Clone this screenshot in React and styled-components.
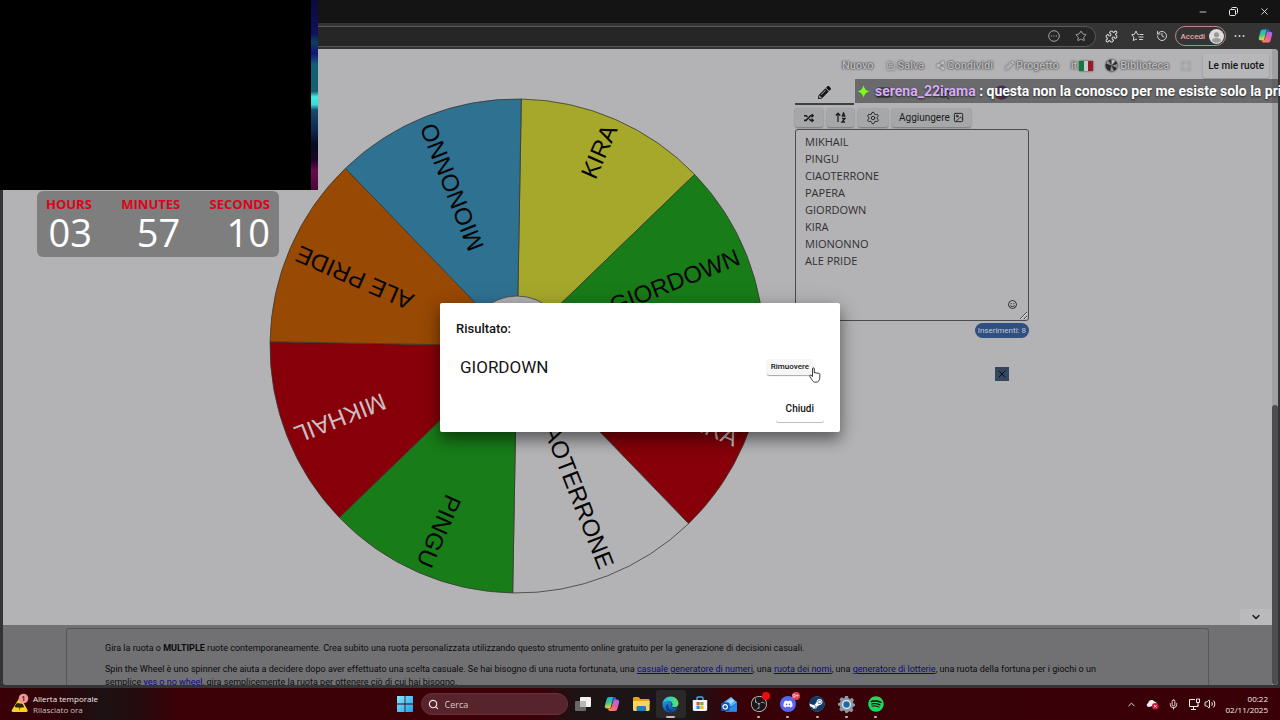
import React from 'react';
import styled, { createGlobalStyle } from 'styled-components';
import {
  FaShareAlt, FaPencilAlt, FaRandom, FaSpotify, FaDiscord, FaSteam, FaRegSmile,
} from 'react-icons/fa';
import { SiObsstudio } from 'react-icons/si';
import {
  Star, Puzzle, History, Minus, X, Save, Maximize, Image as ImageIcon,
  ChevronDown, ChevronUp, Search, Mic, Volume2, Settings, EyeOff, IdCard,
} from 'lucide-react';

const GlobalStyle = createGlobalStyle`
  * { box-sizing: border-box; }
  body { margin: 0; background: #1b1b1b; }
  button, input, textarea { font: inherit; color: inherit; }
  button { border: 0; padding: 0; background: none; cursor: pointer; }
`;

const Screen = styled.div`
  position: relative;
  display: flex;
  flex-direction: column;
  width: 100%;
  height: 100vh;
  overflow: hidden;
  background: #343434;
  font-family: Roboto, "Liberation Sans", sans-serif;
`;

/* Browser chrome */
const TitleBar = styled.header`
  display: flex;
  flex: none;
  justify-content: flex-end;
  align-items: center;
  gap: 18px;
  height: 23px;
  padding: 0 9px;
  background: #141414;
  color: #e8e8e8;
`;

const IconButton = styled.button`
  display: flex;
  flex: none;
  align-items: center;
  justify-content: center;
  width: ${(p) => p.$size || 13}px;
  height: ${(p) => p.$size || 13}px;
`;

const Toolbar = styled.div`
  display: flex;
  flex: none;
  align-items: center;
  gap: 12px;
  height: 26px;
  padding: 0 7px 0 80px;
  color: #d2d2d2;
`;

const AddressBar = styled.div`
  display: flex;
  flex: 1;
  align-items: center;
  gap: 14px;
  height: 21px;
  margin-right: -4px;
  padding: 0 7px;
  border: 1px solid #5a5a5a;
  border-radius: 11px;
  background: #262626;
  color: #a3a3a3;
`;

const AddressInput = styled.input`
  flex: 1;
  min-width: 0;
  border: 0;
  background: none;
  outline: 0;
`;

const SignIn = styled.button`
  display: flex;
  align-items: center;
  gap: 4px;
  height: 20px;
  padding: 0 1px 0 5px;
  margin: 0 -5px 0 -6px;
  border: 1px solid #b58a88;
  border-radius: 10px;
  color: #eba6a8;
  font-size: 8px;
  font-weight: 500;
`;

/* Web page */
const Viewport = styled.main`
  position: relative;
  display: flex;
  flex: 1;
  min-height: 0;
  margin: 0 2px 3px 3px;
  border-radius: 0 4px 4px 4px;
  overflow: hidden;
  background: #b3b2b5;
`;

const Page = styled.div`
  display: flex;
  flex: 1;
  flex-direction: column;
  min-width: 0;
`;

const ScrollTrack = styled.div`
  display: flex;
  align-items: flex-end;
  width: 6px;
  background: #a09fa2;
`;

const ScrollThumb = styled.div`
  width: 6px;
  height: 44%;
  border-radius: 3px;
  background: #4d4d4f;
`;

const Nav = styled.nav`
  display: flex;
  flex: none;
  justify-content: flex-end;
  align-items: center;
  gap: 12px;
  height: 33px;
  padding-right: 3px;
`;

const NavLink = styled.a`
  display: flex;
  align-items: center;
  gap: 2px;
  color: #bcbbbe;
  font-size: 11px;
  font-weight: 500;
  line-height: 13px;
  text-decoration: none;
  text-shadow: 0 0 2px #3c3c3c, 0 0 2px #5c5c5c;
  svg { filter: drop-shadow(0 0 1px #444); }
`;

const MyWheels = styled.button`
  height: 24px;
  padding: 0 5px;
  border-radius: 2px;
  background: #b7b6b9;
  box-shadow: 0 1px 2px rgba(0, 0, 0, 0.25);
  color: #161616;
  font-size: 10px;
  font-weight: 500;
  white-space: nowrap;
`;

const Content = styled.div`
  display: flex;
  flex: 1;
  min-height: 0;
`;

const WheelArea = styled.section`
  display: flex;
  flex: 1;
  justify-content: center;
  align-items: flex-start;
  padding: 16px 0 0 236px;
`;

const WheelSvg = styled.svg`
  display: block;
  width: 496px;
  height: 496px;
`;

const Side = styled.aside`
  display: flex;
  flex: none;
  flex-direction: column;
  justify-content: space-between;
  width: 477px;
`;

const Panel = styled.div`
  display: flex;
  flex-direction: column;
  width: 234px;
`;

const Tabs = styled.div`
  display: flex;
  height: 23px;
`;

const Tab = styled.button`
  display: flex;
  flex: none;
  align-items: center;
  justify-content: center;
  width: 59px;
  border-bottom: 2px solid ${(p) => (p.$active ? '#3d3f42' : 'transparent')};
  color: #141414;
`;

const Tools = styled.div`
  display: flex;
  gap: 4px;
  padding: 3px 0 2px;
`;

const Tool = styled.button`
  display: flex;
  align-items: center;
  justify-content: center;
  gap: 3px;
  height: 19px;
  padding: 0 ${(p) => p.$pad || 8}px;
  border-radius: 2px;
  background: #a6a7a9;
  box-shadow: 0 1px 2px rgba(0, 0, 0, 0.35);
  color: #1c1c1c;
  font-size: 10px;
`;

const EntryBox = styled.div`
  position: relative;
  display: flex;
  height: 192px;
`;

const Entries = styled.textarea`
  flex: 1;
  padding: 3px 9px;
  border: 1px solid #4b4b4d;
  border-radius: 3px;
  background: transparent;
  outline: 0;
  color: #303032;
  font: 11px/17px "Open Sans", "Noto Sans", sans-serif;
`;

const EmojiButton = styled(IconButton)`
  position: absolute;
  right: 11px;
  bottom: 11px;
  color: #222;
`;

const CountPill = styled.span`
  align-self: flex-end;
  margin-top: 2px;
  padding: 0 3px;
  border-radius: 8px;
  background: #2f4f80;
  color: #c3c9d2;
  font-size: 8px;
  line-height: 15px;
`;

const CloseAd = styled.button`
  display: flex;
  align-self: flex-end;
  align-items: center;
  justify-content: center;
  width: 14px;
  height: 14px;
  margin: 29px 20px 0 0;
  background: #34475f;
  color: #0c1016;
`;

const ScrollDown = styled.button`
  display: flex;
  align-self: flex-end;
  align-items: center;
  justify-content: center;
  width: 32px;
  height: 16px;
  background: #bab9bc;
  color: #111;
`;

const Article = styled.footer`
  flex: none;
  height: 60px;
  padding: 3px 63px 0;
  background: #717173;
  overflow: hidden;
`;

const ArticleBox = styled.div`
  height: 57px;
  padding: 13px 92px 0 38px;
  border: 1px solid #565658;
  border-bottom: 0;
  border-radius: 3px 3px 0 0;
  overflow: hidden;
  color: #0b0b0b;
  font-size: 9px;
  line-height: 13px;
`;

const Paragraph = styled.p`
  margin: 0 0 8px;
`;

const TextLink = styled.a`
  color: #0a0a78;
`;

/* Result dialog */
const Backdrop = styled.div`
  position: absolute;
  inset: 0 1px 0 0;
  display: flex;
  align-items: center;
  justify-content: center;
`;

const Dialog = styled.div`
  display: flex;
  flex-direction: column;
  width: 400px;
  height: 129px;
  padding: 18px 16px 10px;
  border-radius: 2px;
  background: #fff;
  box-shadow: 0 8px 14px rgba(0, 0, 0, 0.38), 0 3px 22px rgba(0, 0, 0, 0.2);
  color: #151515;
`;

const DialogTitle = styled.h2`
  margin: 0;
  font-size: 13px;
  font-weight: 500;
  line-height: 16px;
`;

const ResultRow = styled.div`
  display: flex;
  align-items: center;
  justify-content: space-between;
  padding: 19px 11px 0 4px;
  font-size: 17px;
  line-height: 22px;
`;

const RemoveButton = styled.button`
  position: relative;
  height: 16px;
  padding: 0 4px;
  border-radius: 2px;
  background: #f6f6f6;
  box-shadow: 0 1px 1px rgba(0, 0, 0, 0.35);
  font-size: 8px;
  font-weight: 500;
  line-height: 14px;
`;

const HandCursor = styled.svg`
  position: absolute;
  left: 42px;
  top: 8px;
  width: 12px;
  height: 16px;
`;

const CloseButton = styled.button`
  align-self: flex-end;
  height: 26px;
  margin-top: auto;
  padding: 0 10px;
  border-radius: 2px;
  box-shadow: 0 1px 0 rgba(0, 0, 0, 0.25);
  font-size: 10px;
  font-weight: 500;
  line-height: 26px;
`;

/* Stream overlays */
const Camera = styled.div`
  position: absolute;
  left: 0;
  top: 0;
  width: 318px;
  height: 190px;
  padding-left: 311px;
  background: #000;
`;

const CameraEdge = styled.div`
  height: 100%;
  background: linear-gradient(#0b0a3c 0%, #101060 18%, #0c3f60 22%, #11157a 28%, #125f77 34%,
    #12606f 48%, #3ff0e6 51%, #36dcd8 55%, #134a72 58%, #0d2a50 68%, #060a22 76%, #180626 84%,
    #6b0a50 90%, #4a0838 100%);
`;

const Timer = styled.div`
  position: absolute;
  left: 37px;
  top: 191px;
  display: flex;
  justify-content: space-between;
  width: 242px;
  height: 66px;
  padding: 4px 9px 0;
  border-radius: 6px;
  background: #7e7e7f;
  font-family: "Open Sans", "Noto Sans", sans-serif;
`;

const TimerUnit = styled.div`
  display: flex;
  flex-direction: column;
  align-items: flex-end;
`;

const TimerLabel = styled.span`
  color: #dc0419;
  font-size: 13px;
  font-weight: 700;
  line-height: 18px;
`;

const TimerValue = styled.span`
  color: #fff;
  font-size: 38px;
  line-height: 38px;
`;

const Chat = styled.div`
  position: absolute;
  left: 855px;
  right: 0;
  top: 79px;
  display: flex;
  align-items: center;
  gap: 5px;
  height: 24px;
  padding-left: 2px;
  overflow: hidden;
  background: rgba(57, 57, 58, 0.6);
  color: #fff;
  font-size: 14px;
  font-weight: 700;
  white-space: nowrap;
  text-shadow: 0 1px 2px #222;
  svg { flex: none; }
`;

const ChatName = styled.span`
  color: #d5adf5;
`;

/* Taskbar */
const Taskbar = styled.footer`
  display: flex;
  flex: none;
  align-items: center;
  height: 32px;
  padding: 0 12px 0 11px;
  background: linear-gradient(90deg, #3a0007 0%, #2a0609 5%, #1c1213 8%, #260a0d 11%, #3c0007 14%,
    #3c0007 42%, #1d1314 45%, #1a1616 54%, #380108 57%, #3a0007 100%);
  color: #f3ecec;
  font: 8px/11px "Open Sans", "Noto Sans", sans-serif;
`;

const Widget = styled.button`
  display: flex;
  flex: 1;
  align-items: center;
  gap: 4px;
  text-align: left;
`;

const Muted = styled.span`
  color: #cdbfbf;
`;

const TaskCenter = styled.div`
  display: flex;
  flex: none;
  align-items: center;
  padding-left: 8px;
`;

const SearchBox = styled.label`
  display: flex;
  align-items: center;
  gap: 6px;
  width: 147px;
  height: 22px;
  margin: 0 1px 0 8px;
  padding: 0 6px;
  border: 1px solid #68303a;
  border-radius: 11px;
  background: #57242c;
`;

const SearchInput = styled.input`
  flex: 1;
  min-width: 0;
  padding: 0;
  border: 0;
  background: none;
  outline: 0;
  font-size: 9px;
  &::placeholder { color: #d8c7c9; opacity: 1; }
`;

const Apps = styled.div`
  display: flex;
  width: 322px;
`;

const AppButton = styled.button`
  position: relative;
  display: flex;
  flex: 1;
  align-items: center;
  justify-content: center;
  height: 28px;
  border-radius: 3px;
  background: ${(p) => (p.$active ? '#2c2728' : 'none')};
  &::after {
    content: "";
    position: absolute;
    bottom: 0;
    width: ${(p) => (p.$active ? 9 : 3)}px;
    height: 2px;
    border-radius: 1px;
    background: ${(p) => (p.$running || p.$active ? '#c6b6b8' : 'transparent')};
  }
`;

const Badge = styled.span`
  position: absolute;
  right: 3px;
  top: 2px;
  min-width: 8px;
  height: 8px;
  border-radius: 4px;
  background: ${(p) => p.$color};
  color: #fff;
  font-size: 6px;
  line-height: 8px;
`;

const Tray = styled.div`
  display: flex;
  flex: 1;
  align-items: center;
  justify-content: flex-end;
  gap: 9px;
`;

const QuickSettings = styled.button`
  display: flex;
  align-items: center;
  gap: 4px;
`;

const Clock = styled.div`
  margin-left: 1px;
  text-align: right;
`;

const CX = 248;
const R = 247;
const SLICES = [
  { name: 'KIRA', fill: '#a6a82c' },
  { name: 'GIORDOWN', fill: '#187c18' },
  { name: 'PAPERA', fill: '#870009', ink: '#c9bfc2' },
  { name: 'CIAOTERRONE', fill: '#b3b2b5' },
  { name: 'PINGU', fill: '#187c18' },
  { name: 'MIKHAIL', fill: '#870009', ink: '#c9bfc2' },
  { name: 'ALE PRIDE', fill: '#984903' },
  { name: 'MIONONNO', fill: '#2f7191' },
];

const rim = (deg) => {
  const a = (deg * Math.PI) / 180;
  return `${(CX + R * Math.cos(a)).toFixed(2)} ${(CX + R * Math.sin(a)).toFixed(2)}`;
};

function Wheel() {
  return (
    <WheelSvg viewBox="0 0 496 496" role="img" aria-label="Ruota">
      {SLICES.map((s, i) => {
        const from = -89 + i * 45;
        return (
          <path key={s.name} fill={s.fill} stroke="#3b3a33" strokeWidth="0.8"
            d={`M${CX} ${CX}L${rim(from)}A${R} ${R} 0 0 1 ${rim(from + 45)}Z`} />
        );
      })}
      {SLICES.map((s, i) => (
        <text key={s.name} x={CX + 239} y={CX} dy="6" textAnchor="end" fontSize="24"
          fontFamily="Liberation Sans, sans-serif" fill={s.ink || '#060606'}
          transform={`rotate(${-66.5 + i * 45} ${CX} ${CX})`}>{s.name}</text>
      ))}
      <circle cx={CX} cy={CX} r="50" fill="#b3b2b5" stroke="#444" strokeWidth="0.8" />
    </WheelSvg>
  );
}

const CopilotIcon = () => (
  <svg width="16" height="16" viewBox="0 0 16 16">
    <defs>
      <linearGradient id="cpA" x1="0" y1="0" x2="0.3" y2="1">
        <stop offset="0" stopColor="#2a9df4" /><stop offset="0.5" stopColor="#35c58d" /><stop offset="1" stopColor="#f5d33b" />
      </linearGradient>
      <linearGradient id="cpB" x1="0.8" y1="0" x2="0.2" y2="1">
        <stop offset="0" stopColor="#9a6bf2" /><stop offset="0.5" stopColor="#ee5aa0" /><stop offset="1" stopColor="#f58a4a" />
      </linearGradient>
    </defs>
    <path fill="url(#cpA)" d="M5 1h5c1 0 1.500.6 1.800 1.500L12 3.500h-1.500c-1.200 0-1.800.8-2.100 1.800L6.800 11c-.3 1-.9 1.600-2 1.600H3C1.300 12.600.4 11.200.9 9.500L2.700 3C3 1.800 3.800 1 5 1z" />
    <path fill="#1c55c8" d="M9 1h1.200c1 0 1.500.6 1.700 1.500l.3 1h-1.700c-1.200 0-1.800.8-2.100 1.800L7.400 8z" />
    <path fill="url(#cpB)" d="M11 15H6c-1 0-1.500-.6-1.800-1.500L4 12.500h1.400c1.200 0 1.800-.8 2.100-1.800L9.200 5c.3-1 .9-1.600 2-1.600H13c1.700 0 2.600 1.400 2.100 3.100L13.300 13c-.3 1.200-1.100 2-2.300 2z" />
  </svg>
);

const WindowsIcon = () => (
  <svg width="16" height="16" viewBox="0 0 16 16">
    <defs><linearGradient id="win" x1="0" y1="0" x2="1" y2="1"><stop offset="0" stopColor="#8ae4ff" /><stop offset="1" stopColor="#1ba2ea" /></linearGradient></defs>
    <path fill="url(#win)" d="M0 0h7.600v7.600H0zM8.400 0H16v7.600H8.400zM0 8.400h7.600V16H0zM8.400 8.400H16V16H8.400z" />
  </svg>
);

const TaskViewIcon = () => (
  <svg width="16" height="16" viewBox="0 0 16 16">
    <rect x="5" y="1" width="11" height="10" rx="1" fill="#f4f1f1" />
    <rect x="0" y="5" width="11" height="10" rx="1" fill="#777" opacity="0.85" />
    <rect x="5" y="5" width="6" height="6" fill="#b9b7b7" />
  </svg>
);

const FolderIcon = () => (
  <svg width="17" height="16" viewBox="0 0 17 16">
    <path fill="#e0a21a" d="M0 2.500C0 1.700.6 1 1.400 1h4.200l1.800 2h7.800c.8 0 1.400.6 1.400 1.400V8H0z" />
    <path fill="#fcd354" d="M0 5h16.600v8.600c0 .8-.6 1.400-1.400 1.400H1.400C.6 15 0 14.400 0 13.600z" />
    <path fill="#1b7fc0" d="M3.500 15v-3.500c0-.8.6-1.500 1.500-1.500h6.600c.9 0 1.500.7 1.500 1.500V15z" />
  </svg>
);

const EdgeIcon = () => (
  <svg width="17" height="17" viewBox="0 0 17 17">
    <defs>
      <linearGradient id="edA" x1="0" y1="0.4" x2="1" y2="0.3"><stop offset="0" stopColor="#28b4ee" /><stop offset="0.6" stopColor="#36d6a8" /><stop offset="1" stopColor="#71e34e" /></linearGradient>
      <linearGradient id="edB" x1="0" y1="0" x2="0.6" y2="1"><stop offset="0" stopColor="#1b9be6" /><stop offset="1" stopColor="#114a9c" /></linearGradient>
    </defs>
    <path fill="url(#edB)" d="M.5 8C1.500 5 4 4.200 6.200 4.600 9 5 10 7 9.600 8.200 9 10 10.500 12 13 12c1 0 2-.4 2.800-.8C14.500 14.500 11.800 16.500 8.500 16.500 4 16.500.3 13 .5 8z" />
    <path fill="url(#edA)" d="M.5 8C.8 3.800 4.200.5 8.500.5c4.800 0 8 3.500 8 7 0 2.400-1.800 3.800-3.800 3.800-1.600 0-2.900-.6-2.900-1.200 0-.4.7-.8.7-1.900 0-1.800-1.800-3.500-4.500-3.500C3.500 4.700 1.300 6 .5 8z" />
    <path fill="#0d3c86" d="M6 9c-.3 3 2 5.800 5.800 6C8 17 3.500 15 4 10.500 4.200 9.300 5 8.500 6 8z" />
  </svg>
);

const StoreIcon = () => (
  <svg width="16" height="16" viewBox="0 0 16 16">
    <path d="M5 4V2.200C5 1.500 5.500 1 6.200 1h3.600c.7 0 1.200.5 1.200 1.200V4" fill="none" stroke="#4aa8e8" strokeWidth="1.400" />
    <path fill="#f3f5f8" d="M.8 4h14.400v9.600c0 .8-.7 1.400-1.500 1.400H2.300c-.8 0-1.500-.6-1.500-1.400z" />
    <path fill="#e8502c" d="M4.500 6h3.200v3.200H4.500z" /><path fill="#74b62c" d="M8.300 6h3.200v3.200H8.300z" />
    <path fill="#1f95de" d="M4.500 9.800h3.200V13H4.500z" /><path fill="#f5b81c" d="M8.300 9.800h3.200V13H8.300z" />
  </svg>
);

const OutlookIcon = () => (
  <svg width="17" height="16" viewBox="0 0 17 16">
    <path fill="#1c63c4" d="M2 7l8-6 6 5v8.500c0 .8-.6 1.300-1.300 1.300H5z" />
    <path fill="#58b6f4" d="M3 6l7-5 6 5.500-6 4z" />
    <path fill="#a9dcfa" d="M6 5.500l5-3 2 2.500L9.500 8z" />
    <path fill="#2a8be6" d="M4 15.800L16 7v7.500c0 .8-.6 1.300-1.300 1.300z" />
    <rect y="6.500" width="8.500" height="8.500" rx="1.500" fill="#1155b0" />
    <circle cx="4.200" cy="10.800" r="2.200" fill="none" stroke="#fff" strokeWidth="1.200" />
  </svg>
);

const ObsIcon = () => (
  <svg width="16" height="16" viewBox="0 0 16 16">
    <circle cx="8" cy="8" r="7.500" fill="#1a1718" />
    <SiObsstudio size={16} color="#cdc6c6" />
  </svg>
);

const DiscordIcon = () => (
  <svg width="16" height="16" viewBox="0 0 16 16">
    <circle cx="8" cy="8" r="8" fill="#5865f2" />
    <FaDiscord x="3" y="3" size={10} color="#fff" />
  </svg>
);

const SteamIcon = () => (
  <svg width="16" height="16" viewBox="0 0 16 16">
    <circle cx="8" cy="8" r="7.500" fill="#fff" />
    <FaSteam size={16} color="#123a66" />
  </svg>
);

const GearIcon = () => (
  <svg width="17" height="17" viewBox="0 0 17 17">
    <path fill="#8c98a4" d="M7 0h3l.5 2.300 1.500.7 2-1.200 2 2.200-1.200 2 .5 1.300L17 8v2l-2 .8-.6 1.500 1 2-2 2-2-1-1.500.6L9.500 17h-2L6.800 15l-1.500-.6-2 1-2-2 1-2L1.800 10 0 9.300v-2L2 6.500l.6-1.400L1.500 3.200l2-2 2 1L6.500 2z" />
    <circle cx="8.500" cy="8.500" r="4.500" fill="#e7edf2" /><circle cx="8.500" cy="8.500" r="3.200" fill="#1c68a8" />
  </svg>
);

const AlertIcon = () => (
  <svg width="18" height="22" viewBox="0 0 18 22">
    <path fill="#fbd21e" d="M8 5.500c.6-1.200 1.600-1.200 2.200 0L16.500 17c.5 1-.1 2-1.200 2H2c-1.100 0-1.700-1-1.200-2z" />
    <path fill="#2b2105" d="M5 14.500c-1.400 0-1.800-2-.3-2.400.1-2 2.700-3 4.300-1.400 1.900-.7 3.500.6 3.200 1.900 1.200.3 1 1.900-.2 1.900H9.500L8 17.500l.4-3z" />
    <circle cx="12.500" cy="5.500" r="4.800" fill="#f2949c" />
    <path d="M11.300 4.300l1.500-1v4.700" fill="none" stroke="#3a1218" strokeWidth="0.900" />
  </svg>
);

const LinedStar = () => (
  <svg width="13" height="13" viewBox="0 0 13 13" fill="none" stroke="currentColor" strokeWidth="1">
    <path d="M8 4.500L6.500 4.300 5 1 3.500 4.300.7 4.700l2.100 2.400-.5 3.500L5 9l1 .6M8.500 4.500H12.500M7.500 7H12.500M8 9.500h4" strokeLinejoin="round" />
  </svg>
);

const DotsCircle = () => (
  <svg width="12" height="12" viewBox="0 0 12 12">
    <circle cx="6" cy="6" r="5.300" fill="none" stroke="currentColor" />
    <path fill="currentColor" d="M3 5.400h1.200v1.200H3zM5.400 5.400h1.200v1.200H5.400zM7.800 5.400H9v1.200H7.800z" />
  </svg>
);

const Dots = () => (
  <svg width="11" height="4" viewBox="0 0 11 4" fill="currentColor"><circle cx="1.500" cy="2" r="1" /><circle cx="5.500" cy="2" r="1" /><circle cx="9.500" cy="2" r="1" /></svg>
);

const RestoreIcon = () => (
  <svg width="9" height="9" viewBox="0 0 9 9" fill="none" stroke="currentColor"><rect x="0.500" y="2.500" width="6" height="6" rx="1" /><path d="M2.500 1.500c0-.6.400-1 1-1H7c.8 0 1.500.7 1.500 1.500v3.500c0 .6-.4 1-1 1" /></svg>
);

const Avatar = () => (
  <svg width="15" height="15" viewBox="0 0 15 15"><circle cx="7.500" cy="7.500" r="7.500" fill="#dcdcdc" /><circle cx="7.500" cy="5.800" r="2.600" fill="#9a9a9a" /><path fill="#9a9a9a" d="M3 12c0-2.400 2-3 4.500-3s4.500.6 4.500 3c-1.300 1.200-2.800 1.800-4.500 1.800S4.300 13.200 3 12z" /></svg>
);

const Flag = () => (
  <svg width="14" height="10" viewBox="0 0 14 10"><path fill="#0f7a3c" d="M0 0h5v10H0z" /><path fill="#c9c8ca" d="M5 0h4v10H5z" /><path fill="#a01828" d="M9 0h5v10H9z" /></svg>
);

const PieIcon = () => (
  <svg width="13" height="13" viewBox="0 0 13 13"><circle cx="6.500" cy="6.500" r="6" fill="#2b2b2d" /><path fill="#8e8e90" d="M6.500 6.500L1 4.500A6 6 0 0 1 3.500 1.400zM6.500 6.500L12.400 5A6 6 0 0 1 12 9zM6.500 6.500L9 12a6 6 0 0 1-4 .3z" /><path fill="#bdbdc0" d="M6.500 6.500L6.500.5a6 6 0 0 1 4 1.600z" /></svg>
);

const SortIcon = () => (
  <svg width="11" height="11" viewBox="0 0 11 11" fill="none" stroke="currentColor" strokeWidth="1.300">
    <path d="M3 10V1.500M.8 3.500L3 1.200l2.200 2.300M7 4.800L8.500 1 10 4.800M7.300 3.800h2.400M7 6.500h3L7 10h3" />
  </svg>
);

const ColorBall = () => (
  <svg width="15" height="15" viewBox="0 0 15 15"><circle cx="7.500" cy="7.500" r="7" fill="#5b1a7c" /><path fill="#c0102c" d="M7.500 7.500L1 10A7 7 0 0 0 9 14.300z" /><path fill="#1631b0" d="M7.500 7.500L9 14.300A7 7 0 0 0 14.500 7z" /></svg>
);

const Network = () => (
  <svg width="12" height="12" viewBox="0 0 12 12" fill="none" stroke="currentColor"><path d="M7 1.500H1.500v7H10V7M3 11.500h5M5.500 8.500v3M8.500 1h3v3.500h-3zM10 4.500V8" /></svg>
);

const CloudIcon = () => (
  <svg width="13" height="12" viewBox="0 0 13 12"><path fill="#eee" d="M3 9C.5 9 0 5.800 2.200 5 2.500 2 6.500 1 8.200 3.500 10.500 3.500 11.500 6 10 7z" /><circle cx="9.300" cy="8.300" r="3.300" fill="#c8163a" /><path d="M8 7l2.600 2.600M10.600 7L8 9.600" stroke="#fff" strokeWidth="0.800" /></svg>
);

const NAMES = ['MIKHAIL', 'PINGU', 'CIAOTERRONE', 'PAPERA', 'GIORDOWN', 'KIRA', 'MIONONNO', 'ALE PRIDE'];

const APPS = [
  { name: 'Visualizzazione attività', icon: <TaskViewIcon /> },
  { name: 'Copilot', icon: <CopilotIcon /> },
  { name: 'Esplora file', icon: <FolderIcon /> },
  { name: 'Edge', icon: <EdgeIcon />, active: true },
  { name: 'Store', icon: <StoreIcon /> },
  { name: 'Outlook', icon: <OutlookIcon /> },
  { name: 'OBS', icon: <ObsIcon />, running: true, badge: '#ee0b12' },
  { name: 'Discord', icon: <DiscordIcon />, running: true, badge: '#e2414f', count: '9+' },
  { name: 'Steam', icon: <SteamIcon />, running: true },
  { name: 'Impostazioni', icon: <GearIcon />, running: true },
  { name: 'Spotify', icon: <FaSpotify size={16} color="#1ed760" />, running: true },
];

const TIME = [['HOURS', '03'], ['MINUTES', '57'], ['SECONDS', '10']];

export default function App() {
  return (
    <Screen>
      <GlobalStyle />
      <TitleBar>
        <IconButton aria-label="Riduci"><Minus size={10} /></IconButton>
        <IconButton aria-label="Ripristina"><RestoreIcon /></IconButton>
        <IconButton aria-label="Chiudi finestra"><X size={11} /></IconButton>
      </TitleBar>
      <Toolbar>
        <AddressBar>
          <AddressInput aria-label="Indirizzo" />
          <IconButton aria-label="Altro"><DotsCircle /></IconButton>
          <IconButton aria-label="Preferito"><Star size={12} /></IconButton>
        </AddressBar>
        <IconButton aria-label="Estensioni" $size={15}><Puzzle size={13} /></IconButton>
        <IconButton aria-label="Preferiti"><LinedStar /></IconButton>
        <IconButton aria-label="Cronologia"><History size={12} /></IconButton>
        <SignIn>Accedi<Avatar /></SignIn>
        <IconButton aria-label="Menu"><Dots /></IconButton>
        <IconButton aria-label="Copilot" $size={15}><CopilotIcon /></IconButton>
      </Toolbar>

      <Viewport>
        <Page>
          <Nav>
            <NavLink href="#nuovo">Nuovo</NavLink>
            <NavLink href="#salva"><Save size={10} />Salva</NavLink>
            <NavLink href="#condividi"><FaShareAlt size={9} />Condividi</NavLink>
            <NavLink href="#progetto"><FaPencilAlt size={9} />Progetto</NavLink>
            <NavLink href="#lingua">it<Flag /></NavLink>
            <NavLink href="#biblioteca"><PieIcon />Biblioteca</NavLink>
            <NavLink href="#schermo" aria-label="Schermo intero"><Maximize size={10} /></NavLink>
            <MyWheels>Le mie ruote</MyWheels>
          </Nav>
          <Content>
            <WheelArea><Wheel /></WheelArea>
            <Side>
              <Panel>
                <Tabs>
                  <Tab $active aria-label="Modifica"><FaPencilAlt size={13} /></Tab>
                  <Tab aria-label="Scheda"><IdCard size={15} /></Tab>
                  <Tab aria-label="Nascondi"><EyeOff size={14} /></Tab>
                  <Tab aria-label="Colori"><ColorBall /></Tab>
                </Tabs>
                <Tools>
                  <Tool $pad={9} aria-label="Mescola"><FaRandom size={10} /></Tool>
                  <Tool aria-label="Ordina"><SortIcon /></Tool>
                  <Tool $pad={8} aria-label="Opzioni"><Settings size={14} strokeWidth={1.5} /></Tool>
                  <Tool $pad={7}>Aggiungere<ImageIcon size={11} /></Tool>
                </Tools>
                <EntryBox>
                  <Entries aria-label="Inserimenti" defaultValue={NAMES.join('\n')} />
                  <EmojiButton aria-label="Emoji" $size={11}><FaRegSmile size={9} /></EmojiButton>
                </EntryBox>
                <CountPill>Inserimenti: 8</CountPill>
                <CloseAd aria-label="Chiudi annuncio"><X size={12} /></CloseAd>
              </Panel>
              <ScrollDown aria-label="Scorri"><ChevronDown size={12} strokeWidth={2.5} /></ScrollDown>
            </Side>
          </Content>
          <Article>
            <ArticleBox>
              <Paragraph>Gira la ruota o <b>MULTIPLE</b> ruote contemporaneamente. Crea subito una ruota personalizzata utilizzando questo strumento online gratuito per la generazione di decisioni casuali.</Paragraph>
              <Paragraph>Spin the Wheel è uno spinner che aiuta a decidere dopo aver effettuato una scelta casuale. Se hai bisogno di una ruota fortunata, una <TextLink href="#numeri">casuale generatore di numeri</TextLink>, una <TextLink href="#nomi">ruota dei nomi</TextLink>, una <TextLink href="#lotterie">generatore di lotterie</TextLink>, una ruota della fortuna per i giochi o un semplice <TextLink href="#yesno">yes o no wheel</TextLink>, gira semplicemente la ruota per ottenere ciò di cui hai bisogno.</Paragraph>
            </ArticleBox>
          </Article>
        </Page>
        <ScrollTrack><ScrollThumb /></ScrollTrack>
        <Backdrop>
          <Dialog role="dialog" aria-labelledby="result-title">
            <DialogTitle id="result-title">Risultato:</DialogTitle>
            <ResultRow>
              <span>GIORDOWN</span>
              <RemoveButton>
                Rimuovere
                <HandCursor viewBox="0 0 12 16">
                  <path fill="#fff" stroke="#222" strokeWidth="0.900" strokeLinejoin="round" d="M3.500 9.500V1.800c0-1.300 1.800-1.300 1.800 0V6c.2-.8 1.800-.8 1.800.3.200-.8 1.800-.7 1.800.4.300-.7 1.900-.6 1.900.7v3.200c0 2.600-1.200 4.600-4 4.600-2 0-3-.8-3.800-2.400L.8 9.400c-.5-1.100.8-1.700 1.500-.9z" />
                </HandCursor>
              </RemoveButton>
            </ResultRow>
            <CloseButton>Chiudi</CloseButton>
          </Dialog>
        </Backdrop>
      </Viewport>

      <Taskbar>
        <Widget>
          <AlertIcon />
          <span>Allerta temporale<br /><Muted>Rilasciato ora</Muted></span>
        </Widget>
        <TaskCenter>
          <IconButton aria-label="Start" $size={16}><WindowsIcon /></IconButton>
          <SearchBox>
            <Search size={11} strokeWidth={2.5} />
            <SearchInput placeholder="Cerca" aria-label="Cerca" />
          </SearchBox>
          <Apps>
            {APPS.map((a) => (
              <AppButton key={a.name} aria-label={a.name} $active={a.active} $running={a.running}>
                {a.icon}
                {a.badge && <Badge $color={a.badge}>{a.count}</Badge>}
              </AppButton>
            ))}
          </Apps>
        </TaskCenter>
        <Tray>
          <ChevronUp size={11} />
          <CloudIcon />
          <Mic size={11} />
          <QuickSettings aria-label="Rete e volume"><Network /><Volume2 size={12} /></QuickSettings>
          <Clock>00:22<br />02/11/2025</Clock>
        </Tray>
      </Taskbar>

      <Camera><CameraEdge /></Camera>
      <Timer>
        {TIME.map(([label, value]) => (
          <TimerUnit key={label}>
            <TimerLabel>{label}</TimerLabel>
            <TimerValue>{value}</TimerValue>
          </TimerUnit>
        ))}
      </Timer>
      <Chat>
        <svg width="13" height="13" viewBox="0 0 13 13"><path fill="#7dfa1e" d="M6.500 0C7.300 4 9 5.700 13 6.500 9 7.300 7.300 9 6.500 13 5.700 9 4 7.300 0 6.500 4 5.700 5.700 4 6.500 0z" /></svg>
        <span><ChatName>serena_22irama</ChatName> : questa non la conosco per me esiste solo la prima</span>
      </Chat>
    </Screen>
  );
}
